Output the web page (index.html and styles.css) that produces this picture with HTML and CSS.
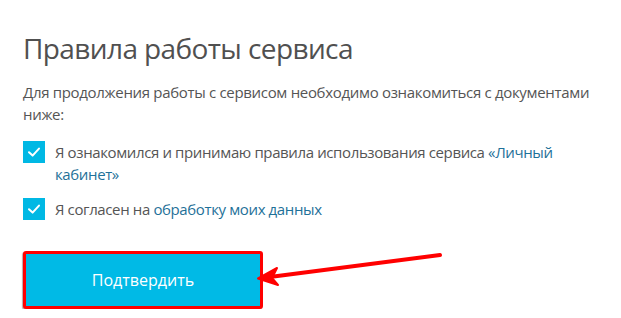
FILE: index.html
```html
<!DOCTYPE html>
<html lang="ru">
<head>
<meta charset="utf-8">
<title>Правила работы сервиса</title>
<link rel="stylesheet" href="styles.css">
</head>
<body>
<main class="page">
  <h1 class="title">Правила работы сервиса</h1>
  <p class="intro">Для продолжения работы с сервисом необходимо ознакомиться с документами ниже:</p>
  <div class="checks">
    <label class="check">
      <span class="box"><svg viewBox="0 0 22 22" width="22" height="22"><path d="M6 11.2 L9.6 14.6 L16 7.6" fill="none" stroke="#fff" stroke-width="2" stroke-linecap="round" stroke-linejoin="round"/></svg></span>
      <span class="label">Я ознакомился и принимаю правила использования сервиса <a class="link" href="#">«Личный кабинет»</a></span>
    </label>
    <label class="check">
      <span class="box"><svg viewBox="0 0 22 22" width="22" height="22"><path d="M6 11.2 L9.6 14.6 L16 7.6" fill="none" stroke="#fff" stroke-width="2" stroke-linecap="round" stroke-linejoin="round"/></svg></span>
      <span class="label">Я согласен на <a class="link" href="#">обработку моих данных</a></span>
    </label>
  </div>
  <div class="actions">
    <button class="confirm" type="button">Подтвердить</button>
    <svg class="arrow" viewBox="0 0 200 40" width="200" height="40">
      <line x1="190" y1="5" x2="12" y2="28" stroke="#ff0000" stroke-width="4" stroke-linecap="round"/>
      <path d="M8 28.5 L27 18 L22 28 L28 35 Z" fill="#ff0000" stroke="#ff0000" stroke-width="2" stroke-linejoin="round"/>
    </svg>
  </div>
</main>
</body>
</html>
```
FILE: styles.css
```css
html, body {
  margin: 0;
  padding: 0;
  background: #ffffff;
}
body {
  font-family: "Open Sans", "Liberation Sans", sans-serif;
  color: #555555;
}
.page {
  padding: 29px 18px 0 23px;
  width: 580px;
}
.title {
  margin: 0;
  font-size: 28px;
  line-height: 38px;
  font-weight: 400;
  letter-spacing: -0.6px;
  color: #505050;
}
.intro {
  margin: 14px 0 0;
  font-size: 15px;
  line-height: 22px;
  letter-spacing: -0.32px;
}
.checks {
  margin-top: 16px;
  display: flex;
  flex-direction: column;
  gap: 13px;
}
.check {
  display: flex;
  align-items: flex-start;
  gap: 10px;
  font-size: 15px;
  line-height: 22px;
  letter-spacing: -0.38px;
}
.label {
  max-width: 530px;
}
.box {
  flex: 0 0 22px;
  width: 22px;
  height: 22px;
  background: #00b8e4;
  display: block;
}
.box svg {
  display: block;
}
.link {
  color: #1f7199;
  text-decoration: none;
}
.actions {
  margin-top: 31px;
  position: relative;
}
.confirm {
  display: block;
  width: 240px;
  height: 58px;
  background: #00bae6;
  border: 3px solid #ff0000;
  border-radius: 3px;
  box-shadow: -1px 1px 1px rgba(60, 0, 0, 0.35);
  color: #ffffff;
  font-family: "Open Sans", "Liberation Sans", sans-serif;
  font-size: 16px;
  padding: 0;
}
.arrow {
  position: absolute;
  left: 227px;
  top: -1px;
}
```
